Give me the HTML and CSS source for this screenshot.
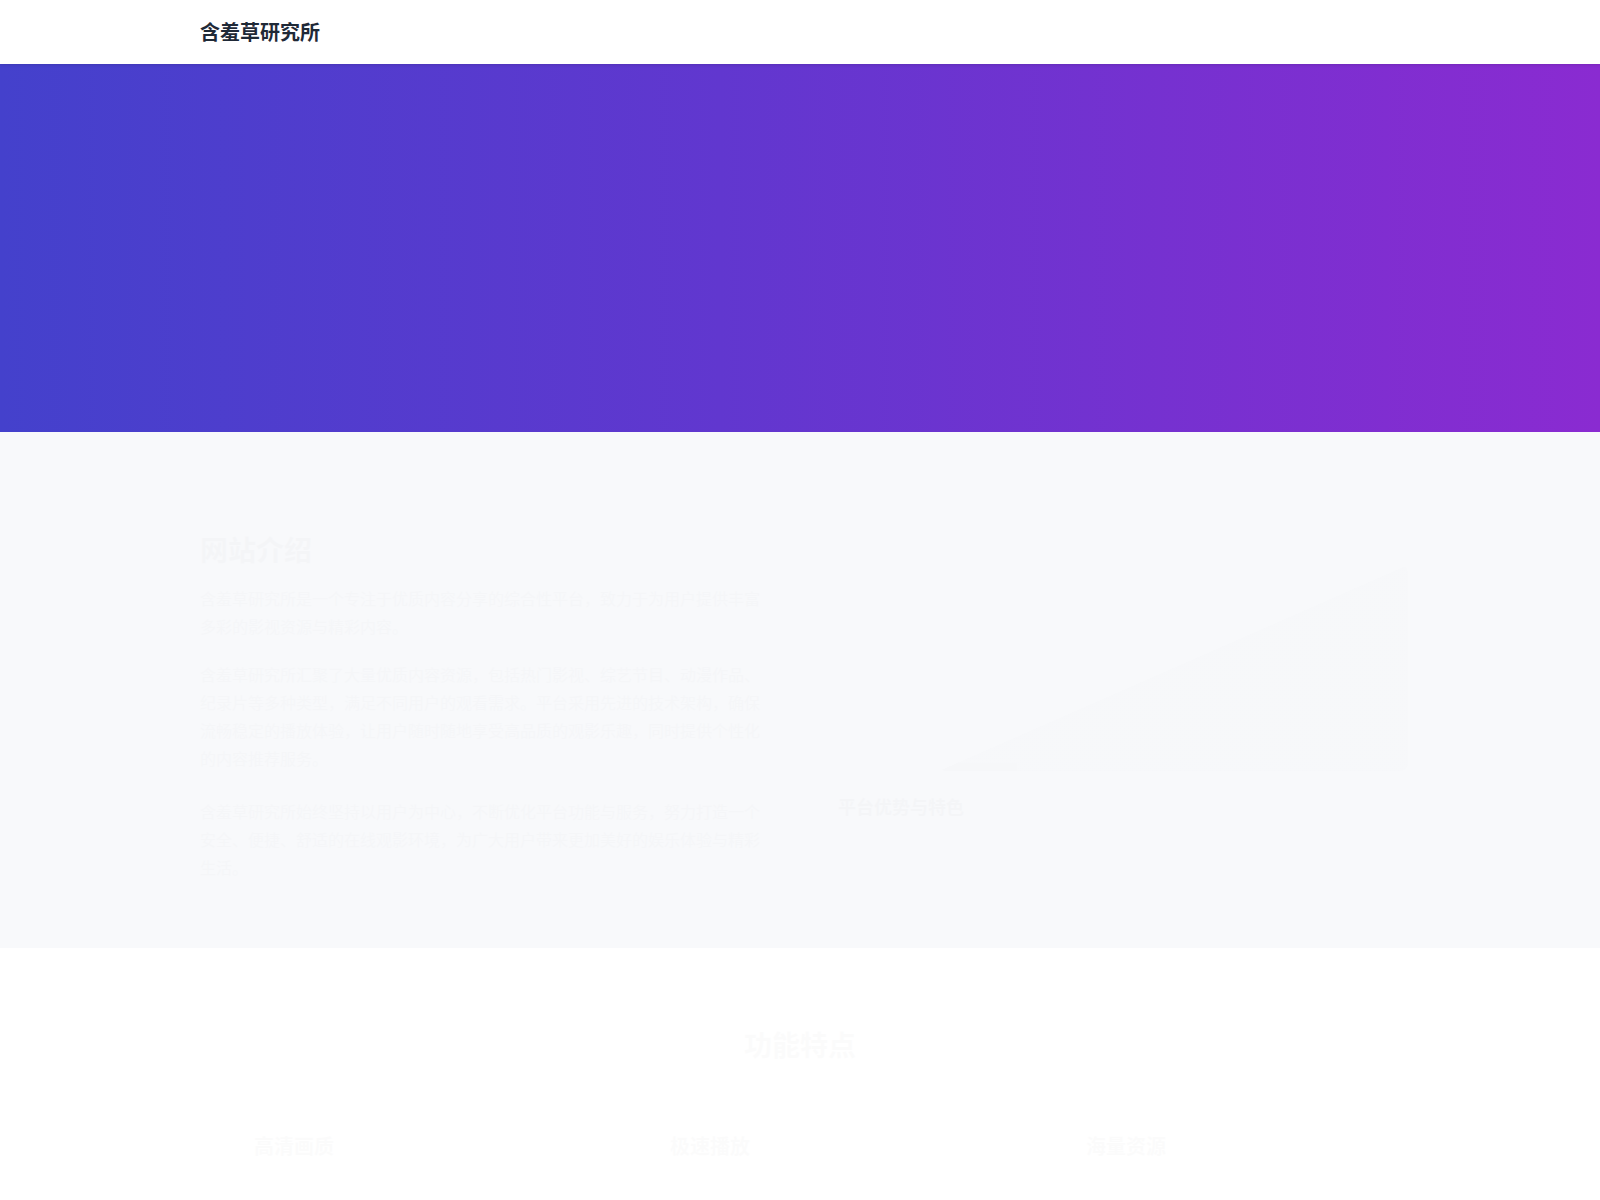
FILE: index.html
```html
<!DOCTYPE html>
<html lang="zh-CN">
<head>
<meta charset="utf-8">
<title>含羞草研究所</title>
<link rel="stylesheet" href="styles.css">
</head>
<body>
<header class="site-header">
  <div class="container header-inner">
    <div class="logo">含羞草研究所</div>
  </div>
</header>

<section class="hero"></section>

<section class="about">
  <div class="container about-grid">
    <div class="about-text fade">
      <h2 class="section-title">网站介绍</h2>
      <p>含羞草研究所是一个专注于优质内容分享的综合性平台，致力于为用户提供丰富多彩的影视资源与精彩内容。</p>
      <p>含羞草研究所汇聚了大量优质内容资源，包括热门影视、综艺节目、动漫作品、纪录片等多种类型，满足不同用户的观看需求。平台采用先进的技术架构，确保流畅稳定的播放体验，让用户随时随地享受高品质的观影乐趣，同时提供个性化的内容推荐服务。</p>
      <p class="last">含羞草研究所始终坚持以用户为中心，不断优化平台功能与服务，努力打造一个安全、便捷、舒适的在线观影环境，为广大用户带来更加美好的娱乐体验与精彩生活。</p>
    </div>
    <div class="about-side fade">
      <div class="about-visual"></div>
      <h3 class="side-title">平台优势与特色</h3>
    </div>
  </div>
</section>

<section class="features">
  <div class="container">
    <h2 class="section-title center fade">功能特点</h2>
    <div class="feature-grid fade">
      <div class="feature-card"><h3>高清画质</h3></div>
      <div class="feature-card"><h3>极速播放</h3></div>
      <div class="feature-card"><h3>海量资源</h3></div>
    </div>
  </div>
</section>
</body>
</html>
```

FILE: styles.css
```css
* { box-sizing: border-box; }

html, body {
  margin: 0;
  padding: 0;
}

body {
  font-family: "Noto Sans CJK SC", "Noto Sans", "Liberation Sans", sans-serif;
  color: #1f2937;
  background: #ffffff;
}

.container {
  width: 1200px;
  margin: 0 auto;
}

.site-header {
  height: 64px;
  background: #ffffff;
  box-shadow: 0 1px 3px rgba(0, 0, 0, 0.12);
  position: relative;
  z-index: 2;
}

.header-inner {
  height: 64px;
  display: flex;
  align-items: center;
}

.logo {
  font-size: 20px;
  font-weight: 700;
  color: #1f2937;
  margin-top: -1px;
}

.hero {
  height: 368px;
  background: linear-gradient(to right, #4441cc 0%, #6137cf 45%, #8a2bd1 100%);
}

.about {
  background: #f8f9fb;
  padding: 99px 0 67px;
}

.about-grid {
  display: grid;
  grid-template-columns: 568px 568px;
  column-gap: 64px;
}

.fade { opacity: 0.01; }

.section-title {
  font-size: 28px;
  line-height: 36px;
  font-weight: 700;
  margin: 0 0 17px;
}

.section-title.center { text-align: center; margin-bottom: 70px; }

.about-text p {
  font-size: 16px;
  line-height: 28px;
  margin: 0 0 20px;
  color: #4b5563;
}

.about-text p.last { margin-top: 25px; margin-bottom: 0; }

.about-side {
  display: flex;
  flex-direction: column;
  padding-top: 34px;
}

.about-visual {
  height: 206px;
  margin-left: 107px;
  margin-right: -8px;
  border-radius: 8px;
  background: linear-gradient(to bottom right, rgba(255,255,255,0) 50%, #7f8699 50%);
}

.side-title {
  font-size: 18px;
  line-height: 28px;
  font-weight: 700;
  margin: 21px 0 0 6px;
}

.features {
  background: #ffffff;
  padding: 78px 0 80px;
}

.feature-grid {
  display: grid;
  grid-template-columns: repeat(3, 1fr);
  column-gap: 48px;
}

.feature-card {
  padding: 0 24px 24px 54px;
}

.feature-card h3 {
  font-size: 20px;
  line-height: 28px;
  font-weight: 700;
  margin: 0;
}
```
